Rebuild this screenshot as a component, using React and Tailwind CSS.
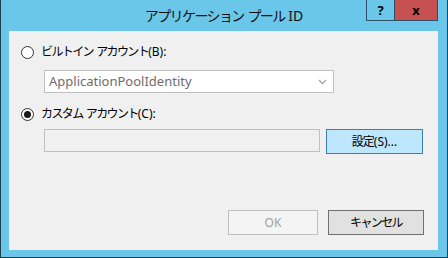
import React from "react";

const FONT = { fontFamily: '"Noto Sans", "Noto Sans CJK JP", sans-serif' };

function Radio({ checked }) {
  return (
    <span className="w-[13px] h-[13px] rounded-full border border-[#333] bg-white flex items-center justify-center shrink-0">
      {checked && <span className="w-[7px] h-[7px] rounded-full bg-[#1a1a1a]" />}
    </span>
  );
}

export default function App() {
  return (
    <div
      className="w-[448px] h-[258px] bg-[#6bc7e9] border-l border-r border-b border-[#1d3f52] flex flex-col text-black"
      style={FONT}
    >
      <div className="h-[31px] relative flex items-center justify-center shrink-0">
        <span className="text-[14px] leading-none pt-[1px] text-[#111] whitespace-pre">
          <span className="tracking-[-1.6px]">アプリケーション</span>
          {" "}
          <span className="tracking-[-1.6px]">プール</span>
          {" ID"}
        </span>
        <div className="absolute top-0 right-[9px] flex h-[21px]">
          <div className="w-[28px] h-[21px] border-l border-b border-[#2b5068] flex items-center justify-center text-[13px] font-bold leading-none">
            ?
          </div>
          <div className="w-[44px] h-[21px] bg-[#c75050] border-l border-r border-b border-[#2b5068] flex items-center justify-center text-[13px] font-bold leading-none">
            x
          </div>
        </div>
      </div>
      <div className="flex-1 ml-[8px] mr-[9px] mb-[7px] bg-[#f0f0f0] border-l border-t border-[#e4f1f8] flex flex-col pt-[12px] pl-[11px] pr-[14px] pb-[15px] text-[12px]">
        <div className="flex items-center h-[16px] gap-[7px]">
          <Radio />
          <span className="leading-none whitespace-pre">
            <span className="tracking-[-1.6px]">ビルトイン</span>
            {" "}
            <span className="tracking-[-1.6px]">アカウント</span>
            (B):
          </span>
        </div>
        <div className="mt-[10px] ml-[23px] w-[290px] h-[23px] bg-white border border-[#c0c0c0] flex items-center justify-between pl-[4px] pr-[5px]">
          <span className="text-[#6d6d6d] text-[13px] leading-none">ApplicationPoolIdentity</span>
          <svg width="9" height="6" viewBox="0 0 9 6" className="mr-[1px]">
            <path d="M1 1 L4.5 4.5 L8 1" fill="none" stroke="#a5a5a5" strokeWidth="1.3" />
          </svg>
        </div>
        <div className="mt-[13px] flex items-center h-[16px] gap-[7px]">
          <Radio checked />
          <span className="leading-none whitespace-pre">
            <span className="tracking-[-1.6px]">カスタム</span>
            {" "}
            <span className="tracking-[-1.6px]">アカウント</span>
            (C):
          </span>
        </div>
        <div className="mt-[7px] flex items-start">
          <div className="ml-[23px] w-[276px] h-[23px] bg-[#f0f0f0] border border-[#c0c0c0]" />
          <div className="ml-[6px] w-[97px] h-[25px] bg-[#bee6fd] border border-[#3c7fb1] flex items-center justify-center leading-none">
            <span className="tracking-[-1px]">設定</span>(S)...
          </div>
        </div>
        <div className="mt-auto flex justify-end gap-[10px]">
          <div className="w-[90px] h-[25px] bg-[#f4f4f4] border border-[#bfbfbf] text-[#a0a0a0] flex items-center justify-center leading-none">
            OK
          </div>
          <div className="w-[96px] h-[25px] bg-[#e1e1e1] border border-[#707070] flex items-center justify-center leading-none">
            <span className="tracking-[-1.6px]">キャンセル</span>
          </div>
        </div>
      </div>
    </div>
  );
}
